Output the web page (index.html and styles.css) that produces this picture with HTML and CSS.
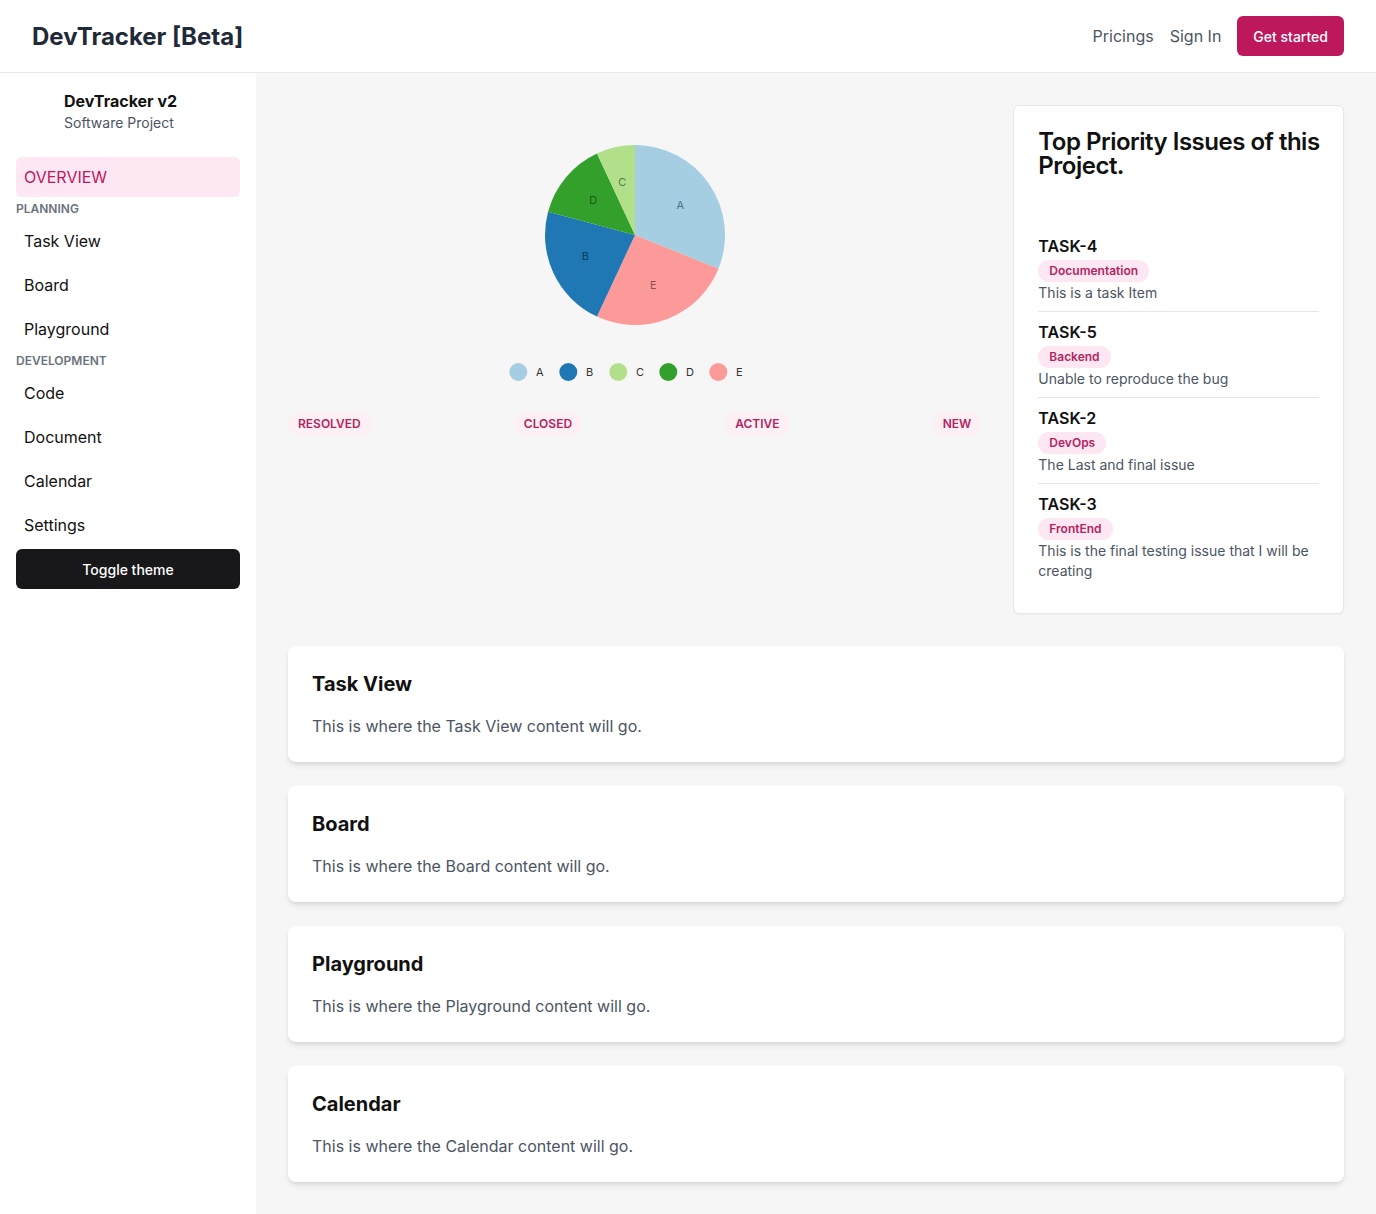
FILE: index.html
```html
<!DOCTYPE html>
<html lang="en">
<head>
<meta charset="utf-8">
<title>DevTracker [Beta]</title>
<link rel="stylesheet" href="styles.css">
</head>
<body>
<header class="topbar">
  <div class="brand">DevTracker [Beta]</div>
  <nav class="topnav">
    <a class="navlink" href="#">Pricings</a>
    <a class="navlink" href="#">Sign In</a>
    <a class="cta" href="#">Get started</a>
  </nav>
</header>
<div class="layout">
  <aside class="sidebar">
    <div class="project">
      <div class="project-name">DevTracker v2</div>
      <div class="project-type">Software Project</div>
    </div>
    <div class="menu">
      <a class="menu-item active" href="#">OVERVIEW</a>
      <div class="menu-label">PLANNING</div>
      <a class="menu-item" href="#">Task View</a>
      <a class="menu-item" href="#">Board</a>
      <a class="menu-item" href="#">Playground</a>
      <div class="menu-label">DEVELOPMENT</div>
      <a class="menu-item" href="#">Code</a>
      <a class="menu-item" href="#">Document</a>
      <a class="menu-item" href="#">Calendar</a>
      <a class="menu-item" href="#">Settings</a>
      <button class="theme-btn">Toggle theme</button>
    </div>
  </aside>
  <main class="main">
    <section class="overview">
      <div class="chart-col">
        <svg class="pie" width="400" height="300" viewBox="0 0 400 300">
          <path d="M200 130 L200 40 A90 90 0 0 1 283.45 163.71 Z" fill="#a6cee3"/>
          <path d="M200 130 L283.45 163.71 A90 90 0 0 1 161.97 211.57 Z" fill="#fb9a99"/>
          <path d="M200 130 L161.97 211.57 A90 90 0 0 1 113.07 106.71 Z" fill="#1f78b4"/>
          <path d="M200 130 L113.07 106.71 A90 90 0 0 1 161.97 48.43 Z" fill="#33a02c"/>
          <path d="M200 130 L161.97 48.43 A90 90 0 0 1 200 40 Z" fill="#b2df8a"/>
          <g class="slice-labels">
            <text x="245.3" y="100" fill="#4f7183">A</text>
            <text x="150.3" y="151" fill="#0e3b5a">B</text>
            <text x="187.3" y="77" fill="#5b7a45">C</text>
            <text x="158.3" y="95" fill="#175812">D</text>
            <text x="218.3" y="180" fill="#94504f">E</text>
          </g>
          <g class="legend">
            <circle cx="83.3" cy="267" r="9" fill="#a6cee3"/>
            <text x="101" y="267">A</text>
            <circle cx="133.3" cy="267" r="9" fill="#1f78b4"/>
            <text x="151" y="267">B</text>
            <circle cx="183.3" cy="267" r="9" fill="#b2df8a"/>
            <text x="201" y="267">C</text>
            <circle cx="233.3" cy="267" r="9" fill="#33a02c"/>
            <text x="251" y="267">D</text>
            <circle cx="283.3" cy="267" r="9" fill="#fb9a99"/>
            <text x="301" y="267">E</text>
          </g>
        </svg>
        <div class="statuses">
          <span class="status">RESOLVED</span>
          <span class="status">CLOSED</span>
          <span class="status">ACTIVE</span>
          <span class="status">NEW</span>
        </div>
      </div>
      <div class="issues">
        <h2 class="issues-title">Top Priority Issues of this Project.</h2>
        <ul class="issue-list">
          <li class="issue">
            <div class="issue-id">TASK-4</div>
            <span class="tag">Documentation</span>
            <div class="issue-desc">This is a task Item</div>
          </li>
          <li class="issue">
            <div class="issue-id">TASK-5</div>
            <span class="tag">Backend</span>
            <div class="issue-desc">Unable to reproduce the bug</div>
          </li>
          <li class="issue">
            <div class="issue-id">TASK-2</div>
            <span class="tag">DevOps</span>
            <div class="issue-desc">The Last and final issue</div>
          </li>
          <li class="issue">
            <div class="issue-id">TASK-3</div>
            <span class="tag">FrontEnd</span>
            <div class="issue-desc">This is the final testing issue that I will be creating</div>
          </li>
        </ul>
      </div>
    </section>
    <section class="panel">
      <h3 class="panel-title">Task View</h3>
      <p class="panel-text">This is where the Task View content will go.</p>
    </section>
    <section class="panel">
      <h3 class="panel-title">Board</h3>
      <p class="panel-text">This is where the Board content will go.</p>
    </section>
    <section class="panel">
      <h3 class="panel-title">Playground</h3>
      <p class="panel-text">This is where the Playground content will go.</p>
    </section>
    <section class="panel">
      <h3 class="panel-title">Calendar</h3>
      <p class="panel-text">This is where the Calendar content will go.</p>
    </section>
  </main>
</div>
</body>
</html>
```
FILE: styles.css
```css
* { box-sizing: border-box; }
html, body { margin: 0; padding: 0; }
body {
  font-family: Inter, "Noto Sans", "Liberation Sans", sans-serif;
  color: #111827;
  background: #ffffff;
}
a { text-decoration: none; color: inherit; }

.topbar {
  height: 73px;
  border-bottom: 1px solid #e5e7eb;
  display: flex;
  align-items: center;
  justify-content: space-between;
  padding: 0 32px;
  background: #fff;
}
.brand {
  font-size: 24px;
  font-weight: 700;
  color: #1f2937;
}
.topnav {
  display: flex;
  align-items: center;
  gap: 16px;
}
.navlink {
  font-size: 16px;
  color: #4b5563;
}
.cta {
  height: 40px;
  display: flex;
  align-items: center;
  padding: 0 16px;
  border-radius: 6px;
  background: #be185d;
  color: #fff;
  font-size: 14px;
  font-weight: 500;
}

.layout {
  display: flex;
  min-height: 1141px;
}
.sidebar {
  width: 256px;
  flex: 0 0 256px;
  background: #fff;
  padding: 16px;
}
.project {
  padding-left: 48px;
  margin-bottom: 24px;
}
.project-name {
  font-size: 16px;
  font-weight: 700;
  line-height: 24px;
  color: #111;
}
.project-type {
  font-size: 14px;
  line-height: 20px;
  color: #4b5563;
}
.menu {
  display: flex;
  flex-direction: column;
  gap: 2px;
}
.menu-item {
  height: 42px;
  display: flex;
  align-items: center;
  padding: 2px 8px 0;
  font-size: 16px;
  color: #111;
  border-radius: 6px;
}
.menu-item.active {
  height: 40px;
  padding-top: 0;
  background: #fce7f3;
  color: #be185d;
}
.menu-label {
  height: 18px;
  display: flex;
  align-items: center;
  font-size: 12px;
  font-weight: 600;
  color: #6b7280;
}
.theme-btn {
  margin-top: 2px;
  height: 40px;
  border: 0;
  border-radius: 6px;
  background: #18181b;
  color: #fff;
  font-family: inherit;
  font-size: 14px;
  font-weight: 500;
}

.main {
  flex: 1;
  background: #f6f6f6;
  padding: 32px;
  display: flex;
  flex-direction: column;
  gap: 24px;
}
.overview {
  display: grid;
  grid-template-columns: repeat(3, minmax(0, 1fr));
  gap: 32px;
  margin-bottom: 8px;
}
.chart-col {
  grid-column: span 2;
  display: flex;
  flex-direction: column;
  align-items: center;
}
.pie { display: block; }
.slice-labels text {
  font-family: Inter, "Noto Sans", sans-serif;
  font-size: 11px;
  text-anchor: middle;
  dominant-baseline: central;
}
.legend text {
  font-family: Inter, "Noto Sans", sans-serif;
  font-size: 11px;
  fill: #333;
  dominant-baseline: central;
}
.statuses {
  align-self: stretch;
  margin-top: 8px;
  display: flex;
  justify-content: space-between;
}
.status {
  font-size: 12px;
  font-weight: 600;
  line-height: 16px;
  padding: 3px 10px;
  border-radius: 999px;
  background: #fdf0f5;
  color: #b3245e;
}

.issues {
  background: #fff;
  border: 1px solid #e5e7eb;
  border-radius: 6px;
  box-shadow: 0 1px 2px rgba(0,0,0,0.04);
  padding: 24px;
}
.issues-title {
  margin: 0 -12px 48px 0;
  font-size: 24px;
  line-height: 24px;
  font-weight: 600;
  color: #111;
  letter-spacing: -0.5px;
}
.issue-list {
  list-style: none;
  margin: 0;
  padding: 0;
}
.issue {
  padding: 8px 0;
  border-bottom: 1px solid #e5e7eb;
}
.issue:last-child { border-bottom: 0; }
.issue-id {
  font-size: 16px;
  line-height: 24px;
  font-weight: 600;
  color: #111;
}
.tag {
  display: inline-block;
  margin: 2px 0 1px;
  padding: 3px 11px;
  font-size: 12px;
  line-height: 16px;
  font-weight: 600;
  border-radius: 999px;
  background: #fce7f3;
  color: #b3245e;
}
.issue-desc {
  font-size: 14px;
  line-height: 20px;
  color: #4b5563;
}

.panel {
  background: #fff;
  border-radius: 8px;
  padding: 24px;
  box-shadow: 0 4px 6px -1px rgba(0,0,0,0.1), 0 2px 4px -2px rgba(0,0,0,0.1);
}
.panel-title {
  margin: 0 0 16px;
  font-size: 20px;
  line-height: 28px;
  font-weight: 700;
  color: #111;
}
.panel-text {
  margin: 0;
  font-size: 16px;
  line-height: 24px;
  color: #4b5563;
}
```
